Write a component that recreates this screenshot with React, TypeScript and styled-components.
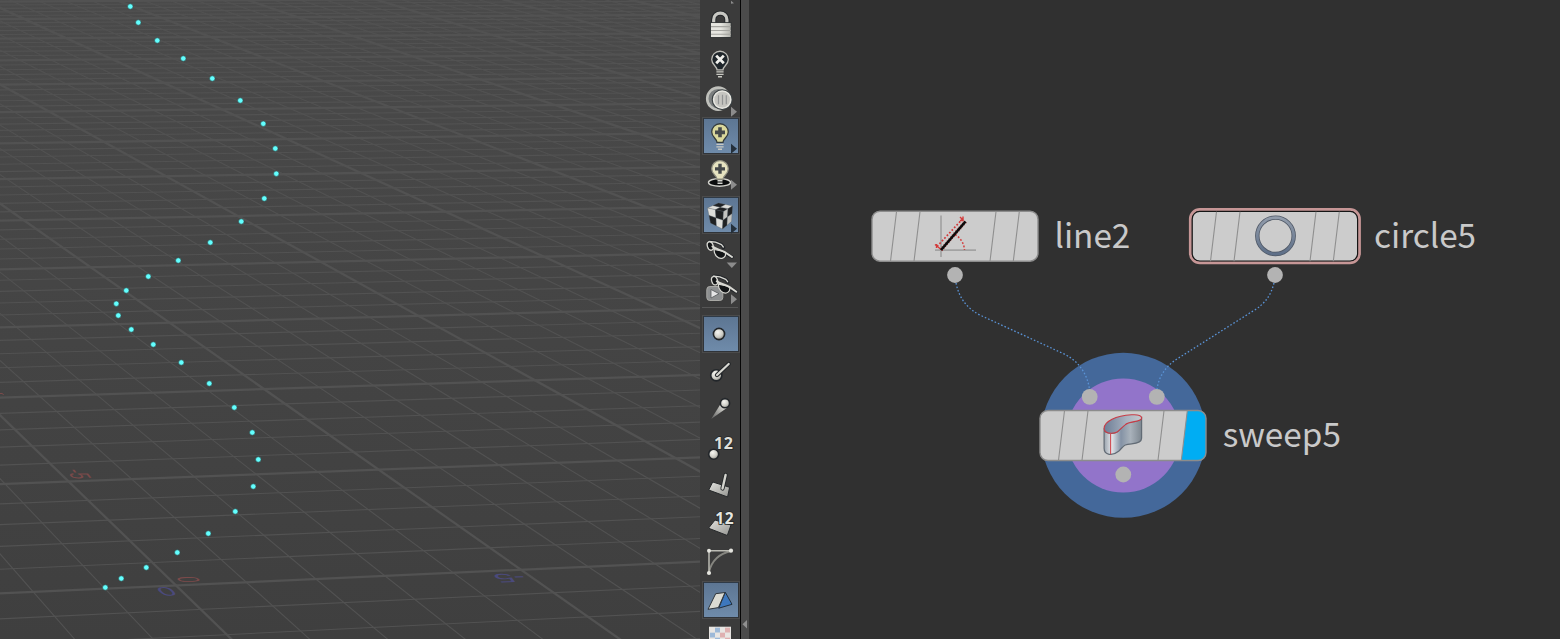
import React from 'react';
import styled, { createGlobalStyle, css } from 'styled-components';

const Global = createGlobalStyle`
  * { box-sizing: border-box; }
  body { margin: 0; background: #303030; overflow: hidden; font-family: "Noto Sans CJK SC", "Noto Sans", sans-serif; }
`;

/* Perspective of the ground plane: grid cell (i, j) to viewport pixels. */
const CAMERA = [71.536799, -19.782048, 176.0139, -0.37678185, -8.8526656, 585.43667, 0.004862735, 0.024816742];
const project = (i: number, j: number) => {
  const w = CAMERA[6] * i + CAMERA[7] * j + 1;
  return [(CAMERA[0] * i + CAMERA[1] * j + CAMERA[2]) / w, (CAMERA[3] * i + CAMERA[4] * j + CAMERA[5]) / w];
};
const range = (a: number, b: number) => Array.from({ length: b - a + 1 }, (_, k) => a + k);

const POINTS = [
  [130.3,6.5],[138.3,22.5],[157.3,40.5],[183.3,58.5],[212.3,78.5],[240.3,100.5],[263.3,123.7],[275.3,148.5],[276.3,173.7],
  [264.3,198.5],[241.3,221.5],[210.3,242.5],[178.3,260.5],[148.3,276.5],[126.3,290.5],[116.3,303.7],[118.3,315.5],[131.3,329.5],
  [153.3,344.5],[181.3,362.5],[209.3,383.5],[234.3,407.5],[252.3,432.5],[258.3,459.5],[253.3,486.5],[235.3,511.5],[208.3,533.5],
  [177.3,552.5],[146.3,567.5],[121.3,578.5],[105.3,587.5],
];

const Shell = styled.div`
  display: flex;
  width: 1560px;
  height: 639px;
  overflow: hidden;
`;
const Viewport = styled.div`
  width: 700px;
  height: 639px;
  background: linear-gradient(#4a4a4a, #464646 35%, #3f3f3f);
  svg { display: block; }
`;
const Toolbar = styled.div`
  display: flex;
  flex-direction: column;
  width: 40px;
  padding-top: 5.5px;
  background: #3b3b3b;
  overflow: hidden;
`;
const Group = styled.div<{ $gap?: number }>`
  display: flex;
  flex-direction: column;
  flex: none;
  margin-top: ${p => p.$gap ?? 0}px;
`;
const Divider = styled.div`
  flex: none;
  width: 36px;
  height: 1px;
  margin: -1px 0 1px 2px;
  background: #565656;
`;
const Tool = styled.div<{ $h: number; $on?: boolean }>`
  position: relative;
  flex: none;
  display: flex;
  align-items: center;
  width: 40px;
  height: ${p => p.$h}px;
  ${p => p.$on && css`
    &::before {
      content: '';
      width: 34px;
      height: 34px;
      margin-left: 3px;
      border: 1px solid #303439;
      border-top-color: #2f3a46;
      background: linear-gradient(#5d7693, #6f8baa);
      box-shadow: 0 0 0 1px #4b4b4b;
    }
  `}
  svg { position: absolute; inset: 0; overflow: visible; }
`;
const Splitter = styled.div`
  display: flex;
  align-items: flex-end;
  width: 9px;
  padding: 0 0 10px 1px;
  border-left: 1px solid #060606;
  background: #4b4b4b;
`;
const Network = styled.div`
  position: relative;
  flex: 1;
  background: #303030;
`;
const Wires = styled.svg`
  position: absolute;
  inset: 0;
`;
const NodeRow = styled.div<{ $x: number; $y: number }>`
  position: absolute;
  left: ${p => p.$x}px;
  top: ${p => p.$y}px;
  display: flex;
  align-items: flex-start;
  height: 51px;
  svg { overflow: visible; flex: none; }
`;
const NodeName = styled.span`
  margin: -3px 0 0 16.5px;
  color: #c9c9c9;
  font-size: 33.3px;
  line-height: 51px;
  white-space: pre;
`;

const Icon = ({ h, children }: { h: number; children: React.ReactNode }) => (
  <svg width="40" height={h} viewBox={`-20 ${-h / 2} 40 ${h}`}>{children}</svg>
);
const More = ({ y, dark }: { y: number; dark?: boolean }) => <path d={`M11 ${y - 5}L17 ${y}L11 ${y + 5}Z`} fill={dark ? '#25303b' : '#8c8c8c'} />;
const Ball = ({ x, y, r = 5 }: { x: number; y: number; r?: number }) => <circle cx={x} cy={y} r={r} fill="url(#ball)" stroke="#22262a" strokeWidth="1.6" />;
const Bulb = ({ y, fill, line, base = true }: { y: number; fill: string; line: string; base?: boolean }) => (
  <g transform={`translate(0 ${y})`}>
    <path d="M-3 9.5C-3 6-8.3 4.5-8.3-.8A8.3 8.3 0 0 1 8.3-.8C8.3 4.5 3 6 3 9.5Z" fill={fill} stroke={line} strokeWidth="1.3" />
    {base && <path d="M-3.6 11.5H3.6M-3.6 14H3.6M-2 16.4H2" stroke="#c9c9c2" strokeWidth="1.4" fill="none" />}
  </g>
);
const Glasses = ({ x, y }: { x: number; y: number }) => (
  <g transform={`translate(${x} ${y})`} stroke="#d8d8d2" fill="#121416" strokeLinejoin="round" strokeLinecap="round">
    <path d="M-10-11.5L-4-11 2-8.5 4-5.500M5 0L12.500 4" fill="none" stroke="#23262a" strokeWidth="3.4" />
    <path d="M-10.500-11.500L-4-10.800 2-8.300 3.800-6" fill="none" strokeWidth="1.3" />
    <ellipse cx="-9.200" cy="-7" rx="2.900" ry="4.300" transform="rotate(-18 -9.200 -7)" strokeWidth="1.300" />
    <path d="M-5.500-3.500C-5.500 2-1.500 6 2.500 5.300C5.500 4.700 6.500 2 5.800-.3C3-2.500-2-2.500-5.500-3.500Z" strokeWidth="1.200" />
    <path d="M-7-6.500C-4.500-3.800 1-3.500 5.500-.8L12.500 4" fill="none" strokeWidth="2" />
  </g>
);

type Pt = [number, number];
/* A cube face split into 2 x 2 alternating tiles. */
const Face = ({ p, light }: { p: [Pt, Pt, Pt, Pt]; light: string }) => {
  const at = (u: number, v: number) => [0, 1].map(k =>
    p[0][k] * (1 - u) * (1 - v) + p[1][k] * u * (1 - v) + p[2][k] * u * v + p[3][k] * (1 - u) * v).join(',');
  return <>{[0, 1].map(r => [0, 1].map(c => (
    <polygon key={`${r}${c}`} points={[at(c / 2, r / 2), at(c / 2 + .5, r / 2), at(c / 2 + .5, r / 2 + .5), at(c / 2, r / 2 + .5)].join(' ')}
      fill={(r + c) % 2 ? '#1f2123' : light} stroke="#55585a" strokeWidth=".3" />
  )))}</>;
};

const Slats = () => (
  <path d="M24.5 .8L18.5 50.2M48 .8L42 50.2M124 .8L118 50.2M147.3 .8L141.3 50.2" stroke="#8f8f8f" strokeWidth="1.1" fill="none" />
);
const Port = ({ x, y }: { x: number; y: number }) => <circle cx={x} cy={y} r="7.9" fill="#b3b3b3" />;

export default function App() {
  return (
    <Shell>
      <Global />
      <Viewport>
        <svg width="700" height="639">
          <g stroke="#525252" fill="none">
            {range(-12, 75).map(i => {
              const [a, b] = project(i, -6), [c, d] = project(i, 90);
              return <line key={i} x1={a} y1={b} x2={c} y2={d} strokeWidth={i % 5 ? 1.1 : 2.3} />;
            })}
            {range(-4, 70).map(j => {
              const [a, b] = project(-8, j), [c, d] = project(60, j);
              return <line key={j} x1={a} y1={b} x2={c} y2={d} strokeWidth={j % 5 ? 1.1 : 2.3} />;
            })}
          </g>
          <g fontFamily="Liberation Sans, sans-serif" fontSize="30">
            <g fill="#7a4a4a">
              <text transform="matrix(.3 .33 -1 .03 175.5 577)">0</text>
              <text transform="matrix(.28 .36 -.92 .02 65.5 469.5)">-5</text>
            </g>
            <path d="M0 393.5H2.5L3.5 395" fill="none" stroke="#7a4a4a" />
            <g fill="#4b4a7c">
              <text transform="matrix(-1 .03 -.38 -.4 171 587)">0</text>
              <text transform="matrix(-1.15 .03 -.36 -.4 522 573.5)">-5</text>
            </g>
          </g>
          {POINTS.map(([x, y], k) => <circle key={k} cx={x} cy={y} r="2.7" fill="#63ffff" stroke="#2f4a4a" strokeWidth=".6" />)}
        </svg>
      </Viewport>

      <Toolbar>
        <Group>
          <Tool $h={37.25}>
            <Icon h={37.25}>
              <defs>
                <radialGradient id="ball" cx=".4" cy=".35" r=".7"><stop offset="0" stopColor="#f6f6f2" /><stop offset=".6" stopColor="#cdcdc6" /><stop offset="1" stopColor="#80807c" /></radialGradient>
                <linearGradient id="metal" x1="0" x2="1" y1="0" y2="1"><stop offset="0" stopColor="#e4e4e0" /><stop offset="1" stopColor="#93938f" /></linearGradient>
                <linearGradient id="lock" x1="0" x2="1" y1="0" y2="0"><stop offset="0" stopColor="#e6e6e0" /><stop offset=".5" stopColor="#e6e6e0" /><stop offset="1" stopColor="#b2b2ac" /></linearGradient>
              </defs>
              <path d="M11-24L14-21.5 11-21Z" fill="#8c8c8c" />
              <path d="M-6.3-1V-5A6.6 6.6 0 0 1 6.9-5V-1" fill="none" stroke="#25282a" strokeWidth="5.2" />
              <path d="M-6.3-1V-5A6.6 6.6 0 0 1 6.9-5V-1" fill="none" stroke="#c8c8c3" strokeWidth="3.2" />
              <rect x="-9.5" y="-2" width="20.6" height="14.8" fill="url(#lock)" stroke="#25282a" strokeWidth=".8" />
              <path d="M-9 2H11M-9 5.8H11M-9 9.6H11" stroke="#a5a5a0" strokeWidth="1.1" />
            </Icon>
          </Tool>
          <Tool $h={37.25}>
            <Icon h={37.25}>
              <Bulb y={-1.3} fill="#1f262b" line="#bdbdb7" />
              <path d="M-3.8-6L3.8 1.6M3.8-6L-3.8 1.6" stroke="#f0f0ec" strokeWidth="2.8" />
            </Icon>
          </Tool>
          <Tool $h={37.25}>
            <Icon h={37.25}>
              <circle cx="-1.8" cy="0" r="11" fill="#7b7f7f" stroke="#bfc0bb" strokeWidth="2.6" />
              <circle cx="2.2" cy="1" r="9" fill="#c5c5c0" stroke="#3c4244" strokeWidth="3" />
              <circle cx="2.2" cy="1" r="8.6" fill="#c5c5c0" stroke="#e8e8e2" strokeWidth="1.6" />
              <path d="M-1.5-3.5V5.5M2.5-4V6M6.3-3.5V5.5" stroke="#929494" strokeWidth="1.2" />
              <More y={13.2} />
            </Icon>
          </Tool>
          <Tool $h={37.25} $on>
            <Icon h={37.25}>
              <Bulb y={-2.8} fill="#d9d79c" line="#343b3d" />
              <path d="M0-8.3V1.7M-5-3.3H5" stroke="#45494a" strokeWidth="3.6" />
              <More y={13} dark />
            </Icon>
          </Tool>
          <Tool $h={37.25}>
            <Icon h={37.25}>
              <ellipse cx="-.5" cy="8.8" rx="11" ry="3.8" fill="#0b0c0d" stroke="#d0d0ca" strokeWidth="1.4" />
              <Bulb y={-4} fill="#e6e3c0" line="#8f8f80" base={false} />
              <path d="M-2.5 7.2H2.5M-2.5 9.5H2.5" stroke="#d5d5d0" strokeWidth="1.5" />
              <path d="M0-9.8V.2M-5-4.8H5" stroke="#45494a" strokeWidth="3.4" />
              <More y={11.2} />
            </Icon>
          </Tool>
        </Group>

        <Group $gap={5}>
          <Tool $h={37} $on>
            <Icon h={37}>
              <Face p={[[-12.5, -7.5], [-1.5, -12.5], [12.5, -9.5], [3.5, -4]]} light="#dededa" />
              <Face p={[[-12.5, -7.5], [3.5, -4], [2.5, 13.5], [-9.5, 7.5]]} light="#dededa" />
              <Face p={[[3.5, -4], [12.5, -9.5], [11.5, 6], [2.5, 13.5]]} light="#c4c4c0" />
              <More y={13.2} dark />
            </Icon>
          </Tool>
          <Tool $h={37}>
            <Icon h={37}>
              <Glasses x={-.5} y={.5} />
              <path d="M6.7 10H17L11.8 15.5Z" fill="#8c8c8c" />
            </Icon>
          </Tool>
          <Tool $h={37}>
            <Icon h={37}>
              <rect x="-13.2" y="-3" width="16" height="14" rx="3" fill="#8d8f90" stroke="#a9a9a5" />
              <path d="M-9 0V8.5L-1 4.2Z" fill="#e6e6e6" stroke="#55585a" strokeWidth=".8" />
              <Glasses x={3.8} y={-1.8} />
              <More y={9.8} />
            </Icon>
          </Tool>
        </Group>
        <Divider />
        <Group $gap={6.5}>
          <Tool $h={38} $on><Icon h={38}><Ball x={-1} y={0} r={5.6} /></Icon></Tool>
          <Tool $h={38}>
            <Icon h={38}>
              <Ball x={-3.7} y={3.3} r={5.6} />
              <path d="M-3 3L8.7-8" stroke="#24272a" strokeWidth="4.4" strokeLinecap="round" />
              <path d="M-3 3L8.7-8" stroke="#d8d8d2" strokeWidth="2.2" strokeLinecap="round" />
            </Icon>
          </Tool>
          <Tool $h={38}>
            <Icon h={38}>
              <linearGradient id="tail" x1="1" y1="0" x2="0" y2="1"><stop offset=".2" stopColor="#deded8" /><stop offset="1" stopColor="#5c5c5c" /></linearGradient>
              <path d="M1.5-7.5L-8.8 9 7.5-2.5Z" fill="url(#tail)" />
              <Ball x={5} y={-6.8} r={4.6} />
            </Icon>
          </Tool>
          <Tool $h={38}>
            <Icon h={38}>
              <Ball x={-6.3} y={6.2} r={5} />
              <text x="-6" y="1.3" fontFamily="Open Sans, sans-serif" fontWeight="700" fontSize="16" fill="#e0e0da" stroke="#25282a" strokeWidth="1.6" paintOrder="stroke" textLength="19">12</text>
            </Icon>
          </Tool>
          <Tool $h={38}>
            <Icon h={38}>
              <path d="M-7.3-4L9.6 1.3 7.6 11-11.3 4Z" fill="url(#metal)" stroke="#25282a" />
              <path d="M5.6-11L2.5 2.5" stroke="#25282a" strokeWidth="4.2" strokeLinecap="round" />
              <path d="M5.6-11L2.5 2.5" stroke="#d4d4ce" strokeWidth="2.4" strokeLinecap="round" />
            </Icon>
          </Tool>
          <Tool $h={38}>
            <Icon h={38}>
              <path d="M-5-4L11 1 7.3 11.5-11.5 4.2Z" fill="url(#metal)" stroke="#25282a" />
              <text x="-4.8" y=".4" fontFamily="Open Sans, sans-serif" fontWeight="700" fontSize="15.5" fill="#e6e6e0" stroke="#25282a" strokeWidth="1.6" paintOrder="stroke" textLength="18.4">12</text>
            </Icon>
          </Tool>
          <Tool $h={38}>
            <Icon h={38}>
              <path d="M11-11Q-7-7-11 10" fill="none" stroke="#85857f" strokeWidth="1.8" />
              <path d="M11-11.3H-11V11" fill="none" stroke="#bcbcb4" strokeWidth="1.5" />
              <g fill="#e4e4de"><circle cx="-11" cy="-11.3" r="2" /><circle cx="11" cy="-11.3" r="2.1" /><circle cx="-11" cy="11" r="2.1" /></g>
            </Icon>
          </Tool>
          <Tool $h={38} $on>
            <Icon h={38}>
              <path d="M5.3-7.7L12 4.3-1.3 8.2Z" fill="#3d77bd" stroke="#22303e" />
              <path d="M-4.3-6.3L5-7.5-1.6 7.6-12 9.3Z" fill="#dbdbd3" stroke="#30363b" />
            </Icon>
          </Tool>
          <Tool $h={38}>
            <Icon h={38}>
              <rect x="-11" y="-11.3" width="22" height="22" fill="#e6e3e0" />
              {range(0, 3).map(r => range(0, 3).map(c => (
                <rect key={`${r}${c}`} x={-10 + c * 5} y={-10.3 + r * 5} width="5" height="5" fill={(r + c) % 2 ? (c > 1 ? '#dfb0b0' : '#9db9d8') : '#e9e6e3'} />
              )))}
            </Icon>
          </Tool>
        </Group>
      </Toolbar>

      <Splitter><svg width="5" height="9"><path d="M5 0V8.5L.5 4.2Z" fill="#909090" /></svg></Splitter>

      <Network>
        <Wires width="811" height="639" viewBox="749 0 811 639">
          <circle cx="1123.3" cy="435.3" r="82.5" fill="#44689a" />
          <circle cx="1123.3" cy="435.5" r="57" fill="#9274ca" />
          <g fill="none" stroke="#5a93d6" strokeWidth="1.3" strokeDasharray="1.6 2">
            <path d="M956 283C959 298 967 309 982 316L1062 353C1078 360 1087 373 1089.5 389" />
            <path d="M1274 283C1271 295 1265 304 1253 311L1177 359C1166 366 1159 376 1157 389" />
          </g>
          <Port x={955} y={275} /><Port x={1275} y={275} />
          <Port x={1089.7} y={396.8} /><Port x={1156.8} y={396.8} /><Port x={1123.3} y={474.5} />
        </Wires>

        <NodeRow $x={123} $y={210.5}>
          <svg width="166" height="51">
            <rect x="0" y=".2" width="166" height="50" rx="8" fill="#cccccc" stroke="#8c8c8c" strokeWidth="1.4" />
            <Slats />
            <path d="M69 4.5V46M63 39.2H104" stroke="#a3a3a3" strokeWidth="1.7" />
            <path d="M65 35.5L90 8.5" stroke="#d33b3b" strokeWidth="1.7" strokeDasharray="1.8 1.8" />
            <path d="M83 23.5C88.5 27 92 32 92.5 39" fill="none" stroke="#d33b3b" strokeWidth="1.5" strokeDasharray="1.8 1.8" />
            <path d="M63 33.5L68.500 38M88 6L91.5 9.5M91 5.5V9.5H88M64.5 33V37" stroke="#d33b3b" strokeWidth="1.4" fill="none" />
            <path d="M69 39L93.5 10.5" stroke="#a83030" strokeWidth="3.6" strokeDasharray="1 1.6" />
            <path d="M69 39L93.5 10.5" stroke="#0b0b0b" strokeWidth="2.6" />
          </svg>
          <NodeName>line2</NodeName>
        </NodeRow>

        <NodeRow $x={442.5} $y={210.5}>
          <svg width="166" height="51">
            <rect x="-1.6" y="-1.4" width="169" height="53.2" rx="9.5" fill="none" stroke="#c69696" strokeWidth="3" />
            <rect x=".2" y=".4" width="165.4" height="49.6" rx="7.5" fill="#cccccc" stroke="#161616" strokeWidth="1.2" />
            <Slats />
            <defs><linearGradient id="ring" x1="0" x2="0" y1="0" y2="1"><stop offset="0" stopColor="#929cab" /><stop offset="1" stopColor="#5e6f88" /></linearGradient></defs>
            <circle cx="83.5" cy="24.8" r="18.2" fill="none" stroke="#4f5866" strokeWidth="4.4" />
            <circle cx="83.5" cy="24.8" r="18.2" fill="none" stroke="url(#ring)" strokeWidth="2.8" />
          </svg>
          <NodeName>circle5</NodeName>
        </NodeRow>

        <NodeRow $x={291.2} $y={410}>
          <svg width="166" height="51">
            <defs>
              <clipPath id="body"><rect x="0" y=".5" width="166" height="50" rx="8" /></clipPath>
              <linearGradient id="wall" x1="0" x2="1"><stop offset="0" stopColor="#9aa3ad" /><stop offset=".2" stopColor="#e3e6ea" /><stop offset=".45" stopColor="#8492a5" /><stop offset=".7" stopColor="#a9b2bb" /><stop offset="1" stopColor="#7d8790" /></linearGradient>
              <linearGradient id="inner" x1="0" x2="1"><stop offset="0" stopColor="#6d7d96" /><stop offset=".6" stopColor="#a9b3c0" /><stop offset="1" stopColor="#c5c9cd" /></linearGradient>
            </defs>
            <rect x="0" y=".5" width="166" height="50" rx="8" fill="#cccccc" />
            <path d="M147.3 0H167V51H141.3Z" fill="#00adf3" clipPath="url(#body)" />
            <Slats />
            <rect x="0" y=".5" width="166" height="50" rx="8" fill="none" stroke="#8c8c8c" strokeWidth="1.4" />
            <g transform="translate(-.4 .3)">
              <path d="M64.5 18V38C64.5 45 73 46 79 41C85 35 84 34 92 33.5C98 33 102 32 102 28V8C98 13 89 10 85 14C79 20 79 23 72 23C68 23 64.5 22 64.5 18Z" fill="url(#wall)" stroke="#626b75" strokeWidth="1.2" />
              <path d="M64.5 18C65 11 76 5.5 92 4.5C99 4 102.5 5.5 102 8C101 12 90 10.5 85.5 14.5C79 20 79 22.5 72 23C67.5 23 64.5 22 64.5 18Z" fill="url(#inner)" stroke="#c83c46" strokeWidth="1.1" />
              <path d="M71 23V44" stroke="#d04a52" strokeWidth="1.1" />
            </g>
          </svg>
          <NodeName>sweep5</NodeName>
        </NodeRow>
      </Network>
    </Shell>
  );
}
